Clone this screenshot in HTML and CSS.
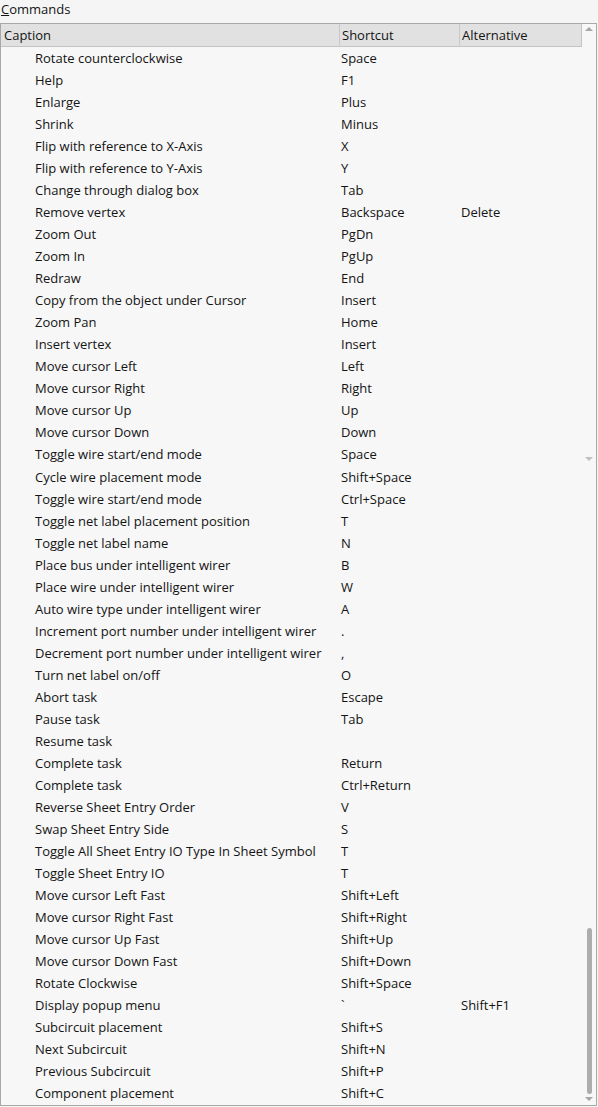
FILE: index.html
```html
<!DOCTYPE html>
<html>
<head>
<meta charset="utf-8">
<link rel="stylesheet" href="styles.css">
</head>
<body>
<div class="label"><span class="u">C</span>ommands</div>
<div class="panel">
  <div class="list">
    <div class="head">
      <div class="hc">Caption</div>
      <div class="hc sep">Shortcut</div>
      <div class="hc sep">Alternative</div>
    </div>
    <div class="rows">
      <div class="row"><span class="c">Rotate counterclockwise</span><span class="s">Space</span><span class="a"></span></div>
      <div class="row"><span class="c">Help</span><span class="s">F1</span><span class="a"></span></div>
      <div class="row"><span class="c">Enlarge</span><span class="s">Plus</span><span class="a"></span></div>
      <div class="row"><span class="c">Shrink</span><span class="s">Minus</span><span class="a"></span></div>
      <div class="row"><span class="c">Flip with reference to X-Axis</span><span class="s">X</span><span class="a"></span></div>
      <div class="row"><span class="c">Flip with reference to Y-Axis</span><span class="s">Y</span><span class="a"></span></div>
      <div class="row"><span class="c">Change through dialog box</span><span class="s">Tab</span><span class="a"></span></div>
      <div class="row"><span class="c">Remove vertex</span><span class="s">Backspace</span><span class="a">Delete</span></div>
      <div class="row"><span class="c">Zoom Out</span><span class="s">PgDn</span><span class="a"></span></div>
      <div class="row"><span class="c">Zoom In</span><span class="s">PgUp</span><span class="a"></span></div>
      <div class="row"><span class="c">Redraw</span><span class="s">End</span><span class="a"></span></div>
      <div class="row"><span class="c">Copy from the object under Cursor</span><span class="s">Insert</span><span class="a"></span></div>
      <div class="row"><span class="c">Zoom Pan</span><span class="s">Home</span><span class="a"></span></div>
      <div class="row"><span class="c">Insert vertex</span><span class="s">Insert</span><span class="a"></span></div>
      <div class="row"><span class="c">Move cursor Left</span><span class="s">Left</span><span class="a"></span></div>
      <div class="row"><span class="c">Move cursor Right</span><span class="s">Right</span><span class="a"></span></div>
      <div class="row"><span class="c">Move cursor Up</span><span class="s">Up</span><span class="a"></span></div>
      <div class="row"><span class="c">Move cursor Down</span><span class="s">Down</span><span class="a"></span></div>
      <div class="row seam"><span class="c">Toggle wire start/end mode</span><span class="s">Space</span><span class="a"></span></div>
      <div class="row"><span class="c">Cycle wire placement mode</span><span class="s">Shift+Space</span><span class="a"></span></div>
      <div class="row"><span class="c">Toggle wire start/end mode</span><span class="s">Ctrl+Space</span><span class="a"></span></div>
      <div class="row"><span class="c">Toggle net label placement position</span><span class="s">T</span><span class="a"></span></div>
      <div class="row"><span class="c">Toggle net label name</span><span class="s">N</span><span class="a"></span></div>
      <div class="row"><span class="c">Place bus under intelligent wirer</span><span class="s">B</span><span class="a"></span></div>
      <div class="row"><span class="c">Place wire under intelligent wirer</span><span class="s">W</span><span class="a"></span></div>
      <div class="row"><span class="c">Auto wire type under intelligent wirer</span><span class="s">A</span><span class="a"></span></div>
      <div class="row"><span class="c">Increment port number under intelligent wirer</span><span class="s">.</span><span class="a"></span></div>
      <div class="row"><span class="c">Decrement port number under intelligent wirer</span><span class="s">,</span><span class="a"></span></div>
      <div class="row"><span class="c">Turn net label on/off</span><span class="s">O</span><span class="a"></span></div>
      <div class="row"><span class="c">Abort task</span><span class="s">Escape</span><span class="a"></span></div>
      <div class="row"><span class="c">Pause task</span><span class="s">Tab</span><span class="a"></span></div>
      <div class="row"><span class="c">Resume task</span><span class="s"></span><span class="a"></span></div>
      <div class="row"><span class="c">Complete task</span><span class="s">Return</span><span class="a"></span></div>
      <div class="row"><span class="c">Complete task</span><span class="s">Ctrl+Return</span><span class="a"></span></div>
      <div class="row"><span class="c">Reverse Sheet Entry Order</span><span class="s">V</span><span class="a"></span></div>
      <div class="row"><span class="c">Swap Sheet Entry Side</span><span class="s">S</span><span class="a"></span></div>
      <div class="row"><span class="c">Toggle All Sheet Entry IO Type In Sheet Symbol</span><span class="s">T</span><span class="a"></span></div>
      <div class="row"><span class="c">Toggle Sheet Entry IO</span><span class="s">T</span><span class="a"></span></div>
      <div class="row"><span class="c">Move cursor Left Fast</span><span class="s">Shift+Left</span><span class="a"></span></div>
      <div class="row"><span class="c">Move cursor Right Fast</span><span class="s">Shift+Right</span><span class="a"></span></div>
      <div class="row"><span class="c">Move cursor Up Fast</span><span class="s">Shift+Up</span><span class="a"></span></div>
      <div class="row"><span class="c">Move cursor Down Fast</span><span class="s">Shift+Down</span><span class="a"></span></div>
      <div class="row"><span class="c">Rotate Clockwise</span><span class="s">Shift+Space</span><span class="a"></span></div>
      <div class="row"><span class="c">Display popup menu</span><span class="s">`</span><span class="a">Shift+F1</span></div>
      <div class="row"><span class="c">Subcircuit placement</span><span class="s">Shift+S</span><span class="a"></span></div>
      <div class="row"><span class="c">Next Subcircuit</span><span class="s">Shift+N</span><span class="a"></span></div>
      <div class="row"><span class="c">Previous Subcircuit</span><span class="s">Shift+P</span><span class="a"></span></div>
      <div class="row"><span class="c">Component placement</span><span class="s">Shift+C</span><span class="a"></span></div>
    </div>
  </div>
  <div class="scroll">
    <div class="arrow up"></div>
    <div class="arrow ghost"></div>
    <div class="track"><div class="thumb"></div></div>
    <div class="arrow down"></div>
  </div>
</div>
</body>
</html>
```

FILE: styles.css
```css
html, body {
  margin: 0;
  padding: 0;
  background: #f5f5f5;
}
body {
  font-family: "Open Sans", "Noto Sans", sans-serif;
  font-size: 13px;
  color: #141414;
  width: 598px;
  height: 1107px;
  overflow: hidden;
}
.label {
  height: 23px;
  line-height: 18px;
  padding-left: 1px;
}
.u {
  text-decoration: underline;
}
.panel {
  width: 595px;
  height: 1081px;
  border: 1px solid #a8a8a8;
  background: #f7f7f7;
  display: flex;
  position: relative;
}
.list {
  flex: 1;
  overflow: hidden;
}
.head {
  display: grid;
  grid-template-columns: 338px 120px 1fr;
  height: 22px;
  background: #e1e1e1;
  border-bottom: 1px solid #c4c4c4;
  border-right: 1px solid #c4c4c4;
}
.hc {
  line-height: 23px;
  padding-left: 3px;
  white-space: nowrap;
}
.hc.sep {
  border-left: 1px solid #c8c8c8;
  padding-left: 2px;
}
.rows {
  display: flex;
  flex-direction: column;
}
.row {
  display: grid;
  grid-template-columns: 338px 120px 1fr;
  height: 22px;
  line-height: 23px;
  white-space: nowrap;
  flex-shrink: 0;
}
.row.seam {
  height: 23px;
}
.c {
  padding-left: 34px;
  overflow: hidden;
}
.s {
  padding-left: 2px;
}
.a {
  padding-left: 2px;
}
.scroll {
  width: 14px;
  display: flex;
  flex-direction: column;
  align-items: center;
  position: relative;
}
.arrow {
  width: 0;
  height: 0;
  border-left: 4px solid transparent;
  border-right: 4px solid transparent;
}
.arrow.up {
  border-bottom: 4px solid #a6a6a6;
  margin-top: 3px;
  margin-bottom: 4px;
}
.arrow.down {
  border-top: 4px solid #a6a6a6;
  margin-top: 3px;
  margin-bottom: 4px;
}
.arrow.ghost {
  position: absolute;
  top: 433px;
  left: 3px;
  border-top: 4px solid #c0c0c0;
}
.track {
  flex: 1;
  width: 100%;
  display: flex;
  flex-direction: column;
  justify-content: flex-end;
  align-items: center;
}
.thumb {
  width: 5px;
  height: 166px;
  background: #adadad;
  border-radius: 3px;
}
```
